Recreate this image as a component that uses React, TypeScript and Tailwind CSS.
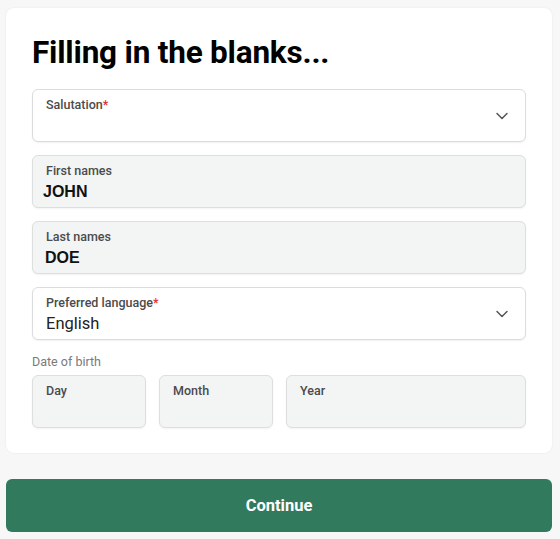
import { ChevronDown } from "lucide-react";

const sans = "font-['Roboto','Liberation_Sans',sans-serif]";

function Label({ text, required = false }: { text: string; required?: boolean }) {
  return (
    <div className="text-[12.5px] leading-[14px] font-medium text-[#4b4b4b]">
      {text}
      {required && <span className="text-[#d33]">*</span>}
    </div>
  );
}

function SelectField({ label, value }: { label: string; value?: string }) {
  return (
    <div className="relative h-[53px] rounded-[6px] border border-[#dcdcdc] bg-white pl-[13px] pt-[8px] shadow-[0_1px_2px_rgba(0,0,0,0.06)]">
      <Label text={label} required />
      {value && <div className="mt-[4px] text-[16.5px] leading-[20px] text-[#222]">{value}</div>}
      <ChevronDown className="absolute right-[13px] top-[16px] h-[20px] w-[20px] text-[#555]" strokeWidth={1.8} />
    </div>
  );
}

function FilledField({ label, value, offset }: { label: string; value: string; offset: string }) {
  return (
    <div className="h-[53px] rounded-[6px] border border-[#dcdfde] bg-[#f2f5f4] pl-[13px] pt-[8px] shadow-[0_1px_2px_rgba(0,0,0,0.05)]">
      <Label text={label} />
      <div className={`mt-[4px] ${offset} font-['Liberation_Sans',Arial,sans-serif] text-[16px] leading-[20px] font-bold text-[#111]`}>
        {value}
      </div>
    </div>
  );
}

function DateBox({ label, className }: { label: string; className: string }) {
  return (
    <div className={`h-[53px] rounded-[6px] border border-[#dcdfde] bg-[#f2f5f4] pl-[13px] pt-[8px] shadow-[0_1px_2px_rgba(0,0,0,0.05)] ${className}`}>
      <Label text={label} />
    </div>
  );
}

export default function App() {
  return (
    <div className={`${sans} min-h-[539px] w-[560px] bg-[#f7f7f7] pl-[6px] pr-[8px] pt-[8px]`}>
      <div className="rounded-[8px] bg-white px-[26px] pt-[26px] pb-[25px] shadow-[0_0_2px_rgba(0,0,0,0.08)]">
        <h1 className="text-[31.5px] leading-[37px] font-bold tracking-[-0.2px] text-black">Filling in the blanks...</h1>
        <div className="mt-[18px] flex flex-col gap-[13px]">
          <SelectField label="Salutation" />
          <FilledField label="First names" value="JOHN" offset="-ml-[3px]" />
          <FilledField label="Last names" value="DOE" offset="-ml-[1px]" />
          <SelectField label="Preferred language" value="English" />
        </div>
        <div className="mt-[15px] text-[12.5px] leading-[14px] text-[#7a7a7a]">Date of birth</div>
        <div className="mt-[6px] flex gap-[13px]">
          <DateBox label="Day" className="w-[114px]" />
          <DateBox label="Month" className="w-[114px]" />
          <DateBox label="Year" className="flex-1" />
        </div>
      </div>
      <button className="mt-[26px] h-[53px] w-full rounded-[6px] bg-[#327a5e] pt-[2px] text-[16.5px] font-bold text-white">
        Continue
      </button>
    </div>
  );
}
